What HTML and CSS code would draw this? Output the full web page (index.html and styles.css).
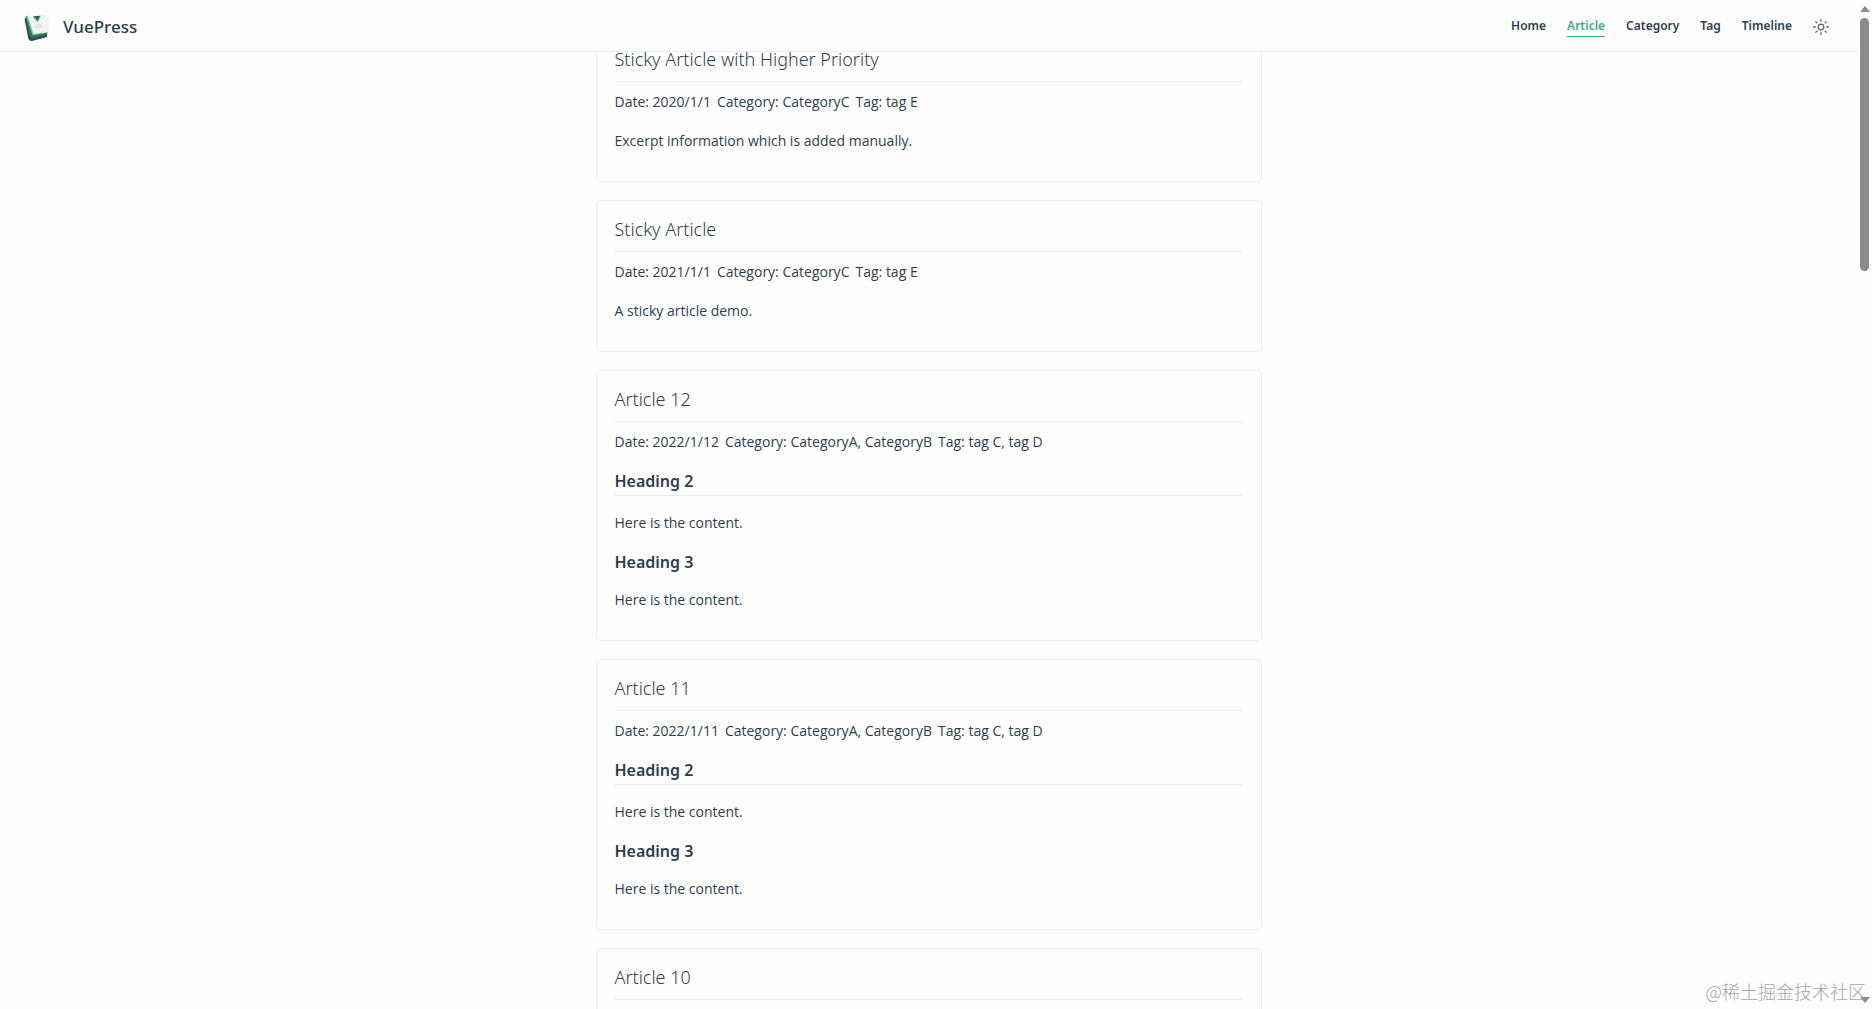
FILE: index.html
```html
<!DOCTYPE html>
<html lang="en">
<head>
<meta charset="utf-8">
<title>Article | VuePress</title>
<link rel="stylesheet" href="styles.css">
</head>
<body>
<div class="page">
  <header class="navbar">
    <a class="brand" href="#">
      <svg class="logo" viewBox="0 0 84 84" aria-hidden="true">
        <path d="M5 20 Q4 14 9 16 L28 68 L72 62 L72 72 L27 84 Q18 84 16 77Z" fill="#2f4a5b"/>
        <path d="M7 13 Q8 8 14 8 L34 60 L73 56 L73 65 L28 75 Q23 74 21 69Z" fill="#2f7d5b"/>
        <path d="M10 11 L15 8 L32 59 L72 55 L72 59 L29 67Z" fill="#6fcf9f"/>
        <path d="M14 8 L68 5 Q75 5 76 12 L78 54 Q78 57 74 58 L32 63Z" fill="#f2f4f3"/>
        <path d="M29 10 L53 8 L44 27Z" fill="#3f8d6a"/>
        <path d="M36 10 L48 9 L43 18Z" fill="#34495e"/>
        <path d="M38 37 Q41 33 45 37 M48 35 Q52 33 56 37 M37 43 L46 42 M49 43 L58 41" fill="none" stroke="#c3cac8" stroke-width="3"/>
      </svg>
      <span>VuePress</span>
    </a>
    <nav class="links">
      <a href="#">Home</a>
      <a class="active" href="#">Article</a>
      <a href="#">Category</a>
      <a href="#">Tag</a>
      <a href="#">Timeline</a>
      <button class="theme" type="button" aria-label="Toggle color mode">
        <svg viewBox="0 0 16 16" aria-hidden="true" fill="none" stroke="#606a74" stroke-width="1.3">
          <circle cx="8" cy="8" r="2.8"/>
          <path d="M8 0V2.8M8 13.2V16M0 8H2.8M13.2 8H16M2.4 2.4L4.3 4.3M11.7 11.7L13.6 13.6M2.4 13.6L4.3 11.7M11.7 4.3L13.6 2.4"/>
        </svg>
      </button>
    </nav>
  </header>

  <main class="articles">
    <article class="card">
      <h1>Sticky Article with Higher Priority</h1>
      <div class="meta"><span>Date: 2020/1/1</span><span>Category: CategoryC</span><span>Tag: tag E</span></div>
      <p>Excerpt information which is added manually.</p>
    </article>
    <article class="card">
      <h1>Sticky Article</h1>
      <div class="meta"><span>Date: 2021/1/1</span><span>Category: CategoryC</span><span>Tag: tag E</span></div>
      <p>A sticky article demo.</p>
    </article>
    <article class="card">
      <h1>Article 12</h1>
      <div class="meta"><span>Date: 2022/1/12</span><span>Category: CategoryA, CategoryB</span><span>Tag: tag C, tag D</span></div>
      <h2>Heading 2</h2>
      <p>Here is the content.</p>
      <h3>Heading 3</h3>
      <p>Here is the content.</p>
    </article>
    <article class="card">
      <h1>Article 11</h1>
      <div class="meta"><span>Date: 2022/1/11</span><span>Category: CategoryA, CategoryB</span><span>Tag: tag C, tag D</span></div>
      <h2>Heading 2</h2>
      <p>Here is the content.</p>
      <h3>Heading 3</h3>
      <p>Here is the content.</p>
    </article>
    <article class="card">
      <h1>Article 10</h1>
    </article>
  </main>

  <div class="scrollbar" aria-hidden="true">
    <svg viewBox="0 0 10 6"><path d="M5 0L10 6H0Z"/></svg>
    <div class="track"><div class="thumb"></div></div>
    <svg viewBox="0 0 10 6"><path d="M5 6L10 0H0Z"/></svg>
  </div>
  <div class="watermark">@稀土掘金技术社区</div>
</div>
</body>
</html>
```
FILE: styles.css
```css
* { box-sizing: border-box; }

body {
  margin: 0;
  background: #fefefe;
  color: #2c3e50;
  font: 14px/24px "Open Sans", "Noto Sans", sans-serif;
}

h1, h2, h3, p { margin: 0; }

a { color: inherit; text-decoration: none; }

.page {
  position: relative;
  height: 100vh;
  padding-right: 15px;
  overflow: hidden;
}

.navbar {
  position: absolute;
  top: 0;
  left: 0;
  right: 15px;
  z-index: 1;
  display: flex;
  align-items: center;
  justify-content: space-between;
  height: 52px;
  padding: 2px 28px 0 23px;
  background: #fefefe;
  border-bottom: 1px solid #eaecef;
}

.brand {
  display: flex;
  align-items: center;
  gap: 12px;
  font-family: "Noto Sans", sans-serif;
  font-size: 17px;
  font-weight: 500;
}

.logo { width: 28px; height: 28px; }

.links {
  display: flex;
  align-items: center;
  gap: 21px;
  font-family: "Noto Sans", sans-serif;
  font-size: 12px;
  line-height: 18px;
  font-weight: 600;
}

.links a {
  padding-bottom: 1px;
  border-bottom: 1px solid transparent;
}

.links .active {
  color: #3eaf7c;
  border-color: #3eaf7c;
}

.theme {
  display: flex;
  padding: 0;
  border: 0;
  background: none;
}

.theme svg { width: 16px; height: 16px; }

.articles {
  display: flex;
  flex-direction: column;
  gap: 18px;
  max-width: 666px;
  margin: 0 auto;
  padding-top: 30px;
}

.card {
  flex: none;
  padding: 15px 18px 28px;
  border: 1px solid #eaecef;
  border-radius: 5px;
}

.card h1 {
  padding-bottom: 8px;
  border-bottom: 1px solid #eaecef;
  font-family: "Noto Sans", sans-serif;
  font-size: 18px;
  font-weight: 300;
  line-height: 27px;
}

.meta {
  display: flex;
  gap: 6px;
  margin: 8px 0 15px;
}

.card h2, .card h3 {
  font-family: "Noto Sans", sans-serif;
  font-size: 16px;
  font-weight: 600;
}

.card h2 {
  padding-bottom: 2px;
  border-bottom: 1px solid #eaecef;
}

.card h2 + p { margin: 15px 0; }

.card h3 { margin-bottom: 14px; }

.scrollbar {
  position: absolute;
  top: 0;
  right: 0;
  bottom: 0;
  display: flex;
  flex-direction: column;
  align-items: center;
  gap: 6px;
  width: 15px;
  padding: 6px 0;
}

.scrollbar svg { width: 10px; height: 6px; fill: #8b8b8b; }

.track { flex: 1; }

.thumb {
  width: 9px;
  height: 26%;
  border-radius: 5px;
  background: #8b8b8b;
}

.watermark {
  position: absolute;
  right: 6px;
  bottom: 6px;
  color: #a5a5a5;
  font: 300 18px/24px "Noto Sans CJK SC", sans-serif;
}
```
